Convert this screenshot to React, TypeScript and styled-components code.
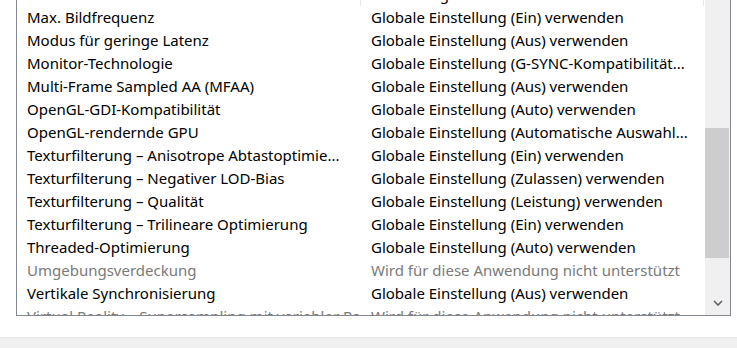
import React from "react";
import styled, { createGlobalStyle } from "styled-components";

const Global = createGlobalStyle`
  html, body { margin: 0; padding: 0; background: #ffffff; overflow: hidden; }
  body { font-family: "Noto Sans", "Open Sans", "DejaVu Sans", sans-serif; }
`;

const Page = styled.div`
  width: 737px;
  height: 348px;
  display: flex;
  flex-direction: column;
  overflow: hidden;
  background: #ffffff;
`;

const Frame = styled.div`
  margin: -18px 6px 0 16px;
  height: 332px;
  border: 1px solid #828790;
  display: flex;
  background: #ffffff;
`;

const ListArea = styled.div`
  flex: 1;
  display: flex;
  flex-direction: column;
  overflow: hidden;
`;

const Row = styled.div`
  display: grid;
  grid-template-columns: 343px 1px 342px 1px;
  height: 23px;
  flex-shrink: 0;
`;

const Cell = styled.div<{ $muted?: boolean }>`
  padding: 0 10px;
  font-size: 15px;
  line-height: 23px;
  white-space: nowrap;
  overflow: hidden;
  color: ${(p) => (p.$muted ? "#7a7a7a" : "#000000")};
`;

const HeaderDivider = styled.div`
  background: #e5e5e5;
`;

const Gap = styled.div``;

const Scrollbar = styled.div`
  width: 25px;
  flex-shrink: 0;
  display: flex;
  flex-direction: column;
  background: #f0f0f0;
`;

const ArrowButton = styled.div`
  height: 25px;
  flex-shrink: 0;
  display: flex;
  align-items: center;
  justify-content: center;
`;

const Track = styled.div`
  flex: 1;
  display: flex;
  flex-direction: column;
`;

const Thumb = styled.div`
  margin-right: 1px;
  background: #cdcdcd;
  flex-shrink: 0;
`;

const Footer = styled.div`
  margin-top: 21px;
  flex: 1;
  border-top: 1px solid #e5e5e5;
  background: #f0f0f0;
`;

type Item = { name: string; value: string; muted?: boolean };

const items: Item[] = [
  { name: "Max. Bildfrequenz", value: "Globale Einstellung (Ein) verwenden" },
  { name: "Modus für geringe Latenz", value: "Globale Einstellung (Aus) verwenden" },
  { name: "Monitor-Technologie", value: "Globale Einstellung (G-SYNC-Kompatibilität..." },
  { name: "Multi-Frame Sampled AA (MFAA)", value: "Globale Einstellung (Aus) verwenden" },
  { name: "OpenGL-GDI-Kompatibilität", value: "Globale Einstellung (Auto) verwenden" },
  { name: "OpenGL-rendernde GPU", value: "Globale Einstellung (Automatische Auswahl..." },
  { name: "Texturfilterung – Anisotrope Abtastoptimie...", value: "Globale Einstellung (Ein) verwenden" },
  { name: "Texturfilterung – Negativer LOD-Bias", value: "Globale Einstellung (Zulassen) verwenden" },
  { name: "Texturfilterung – Qualität", value: "Globale Einstellung (Leistung) verwenden" },
  { name: "Texturfilterung – Trilineare Optimierung", value: "Globale Einstellung (Ein) verwenden" },
  { name: "Threaded-Optimierung", value: "Globale Einstellung (Auto) verwenden" },
  { name: "Umgebungsverdeckung", value: "Wird für diese Anwendung nicht unterstützt", muted: true },
  { name: "Vertikale Synchronisierung", value: "Globale Einstellung (Aus) verwenden" },
  { name: "Virtual Reality – Supersampling mit variabler Rate", value: "Wird für diese Anwendung nicht unterstützt", muted: true },
];

const thumbTop = 120;
const thumbHeight = 130;

export default function App() {
  return (
    <>
      <Global />
      <Page>
        <Frame>
          <ListArea>
            <Row>
              <Cell>Funktion</Cell>
              <HeaderDivider />
              <Cell>Einstellung</Cell>
              <HeaderDivider />
            </Row>
            {items.map((it) => (
              <Row key={it.name}>
                <Cell $muted={it.muted}>{it.name}</Cell>
                <Gap />
                <Cell $muted={it.muted}>{it.value}</Cell>
                <Gap />
              </Row>
            ))}
          </ListArea>
          <Scrollbar>
            <ArrowButton>
              <svg width="10" height="6" viewBox="0 0 10 6">
                <polyline points="1,5 5,1 9,5" fill="none" stroke="#606060" strokeWidth="1.6" />
              </svg>
            </ArrowButton>
            <Track>
              <Thumb style={{ marginTop: thumbTop, height: thumbHeight }} />
            </Track>
            <ArrowButton>
              <svg width="10" height="6" viewBox="0 0 10 6">
                <polyline points="1,1 5,5 9,1" fill="none" stroke="#606060" strokeWidth="1.6" />
              </svg>
            </ArrowButton>
          </Scrollbar>
        </Frame>
        <Footer />
      </Page>
    </>
  );
}
